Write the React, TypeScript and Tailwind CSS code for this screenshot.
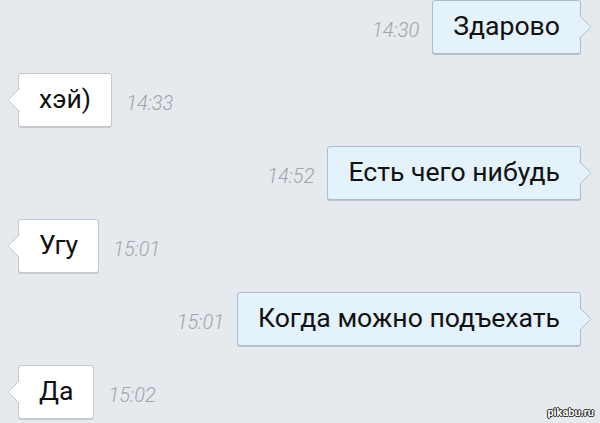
const messages = [
  { out: true, text: "Здарово", time: "14:30" },
  { out: false, text: "хэй)", time: "14:33" },
  { out: true, text: "Есть чего нибудь", time: "14:52" },
  { out: false, text: "Угу", time: "15:01" },
  { out: true, text: "Когда можно подъехать", time: "15:01" },
  { out: false, text: "Да", time: "15:02" },
];

function Tail({ out }: { out: boolean }) {
  const fill = out ? "#e4f2fb" : "#ffffff";
  const stroke = out ? "#a9bfcf" : "#c3c8ce";
  return (
    <svg
      width="13"
      height="26"
      viewBox="0 0 13 26"
      className={
        out
          ? "absolute -right-[12px] top-1/2 -translate-y-1/2"
          : "absolute -left-[12px] top-1/2 -translate-y-1/2 -scale-x-100"
      }
      aria-hidden="true"
    >
      <path d="M0 1 L11.5 12.5 L11.5 13.5 L0 25 Z" fill={fill} />
      <path d="M0.5 1.5 L11.5 12.5 L11.5 13.5 L0.5 24.5" fill="none" stroke={stroke} strokeWidth="1" />
    </svg>
  );
}

function Bubble({ out, text }: { out: boolean; text: string }) {
  return (
    <div
      className={
        "relative flex h-[54px] items-center rounded-[3px] border px-[20px] text-[26.6px] leading-none text-[#111] " +
        (out
          ? "border-[#a9bfcf] bg-[#e4f2fb] shadow-[0_1px_0_#b5c4cf]"
          : "border-[#c3c8ce] bg-white shadow-[0_1px_0_#c6cbd0]")
      }
    >
      <span className="pb-[1px]">{text}</span>
      <Tail out={out} />
    </div>
  );
}

function Time({ t }: { t: string }) {
  return <span className="mt-[5px] text-[20px] font-light italic leading-none text-[#9ea4ab]">{t}</span>;
}

export default function App() {
  return (
    <div
      className="relative h-[423px] w-[600px] overflow-hidden bg-[#e6e9ed]"
      style={{ fontFamily: "Roboto, 'Noto Sans', sans-serif" }}
    >
      <div className="flex flex-col gap-[19px]">
        {messages.map((m, i) =>
          m.out ? (
            <div key={i} className="flex items-center justify-end gap-[13px] pr-[19px]">
              <Time t={m.time} />
              <Bubble out text={m.text} />
            </div>
          ) : (
            <div key={i} className="flex items-center gap-[14px] pl-[18px]">
              <Bubble out={false} text={m.text} />
              <Time t={m.time} />
            </div>
          )
        )}
      </div>
      <span className="absolute bottom-[5px] right-[6px] text-[11px] font-bold leading-none text-white [text-shadow:0_0_1px_#222,0_0_1px_#222,1px_0_0_#333,-1px_0_0_#333,0_1px_0_#333,0_-1px_0_#333]">
        pikabu.ru
      </span>
    </div>
  );
}
